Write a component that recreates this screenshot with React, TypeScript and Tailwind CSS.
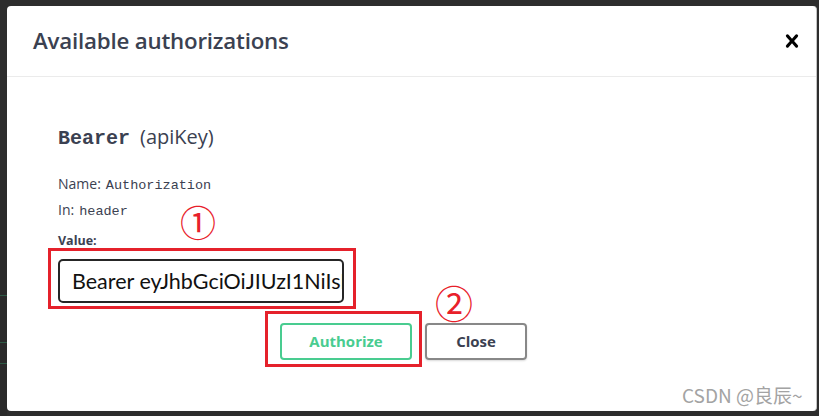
import React from 'react';

const sans = { fontFamily: '"Open Sans", "Noto Sans", sans-serif' };

function CloseIcon() {
  return (
    <svg width="26" height="26" viewBox="0 0 20 20" className="text-black">
      <path
        fill="currentColor"
        d="M14.348 14.849a1.2 1.2 0 0 1-1.697 0L10 11.819l-2.651 3.029a1.2 1.2 0 1 1-1.697-1.697l2.758-3.15-2.759-3.152a1.2 1.2 0 1 1 1.697-1.697L10 8.183l2.651-3.031a1.2 1.2 0 1 1 1.697 1.697l-2.758 3.152 2.758 3.15a1.2 1.2 0 0 1 0 1.698z"
      />
    </svg>
  );
}

export default function App() {
  return (
    <div className="relative w-[819px] h-[416px] overflow-hidden bg-[#2d2d2d] pt-[6px] pl-[7px] font-['Open_Sans','Noto_Sans',sans-serif]">
      {/* page behind the overlay */}
      <div className="absolute left-0 top-[180px] w-[7px] h-[236px] bg-[#2a2a2a]" />
      <div className="absolute left-0 top-[295px] w-[7px] h-px bg-[#2e5a45]" />
      <div className="absolute left-0 top-[342px] w-[7px] h-px bg-[#2e5a45]" />
      <div className="absolute left-0 top-[363px] w-[7px] h-px bg-[#2e5a45]" />

      {/* modal */}
      <div className="relative w-[810px] h-[405px] bg-white rounded-[4px] border-r border-[#c4c4c4] flex flex-col">
        <div className="h-[71px] shrink-0 flex items-center justify-between pl-[26px] pr-[11px] border-b border-[#ebebeb]">
          <h3 className="text-[22.3px] font-semibold text-[#3b4151] tracking-[-0.2px]">Available authorizations</h3>
          <CloseIcon />
        </div>

        <div className="flex flex-col pl-[51px] text-[#3b4151]">
          <h4 className="mt-[45px] h-[28px] flex items-baseline text-[20px]">
            <code className="font-['Liberation_Mono',monospace] font-bold">Bearer</code>
            <span className="ml-[10px] font-medium" style={sans}>(apiKey)</span>
          </h4>

          <div className="mt-[23px] h-[20px] flex items-baseline text-[14px]">
            <span>Name:</span>
            <code className="ml-[5px] text-[13.5px] font-['Liberation_Mono',monospace]">Authorization</code>
          </div>
          <div className="mt-[6px] h-[20px] flex items-baseline text-[14px]">
            <span>In:</span>
            <code className="ml-[5px] text-[13.5px] font-['Liberation_Mono',monospace]">header</code>
          </div>

          <label className="mt-[14px] h-[16px] flex items-center text-[12.5px] font-bold">Value:</label>

          <div className="mt-[10px] w-[286px] h-[44px] border-2 border-[#262626] rounded-[5px] overflow-hidden flex items-center pl-[12px]">
            <span className="whitespace-nowrap text-[21.5px] text-[#111] font-['Lato',sans-serif]">
              Bearer eyJhbGciOiJIUzI1NiIsInR5cCI6IkpXVCJ9
            </span>
          </div>

          <div className="mt-[20px] flex gap-[13px] ml-[222px]">
            <button className="w-[132px] h-[37px] rounded-[4px] border-2 border-[#49cc90] text-[#49cc90] text-[15px] font-bold">
              Authorize
            </button>
            <button className="w-[102px] h-[37px] rounded-[4px] border-2 border-[#888] text-[#3b4151] text-[15px] font-bold shadow-[0_1px_2px_rgba(0,0,0,0.15)]">
              Close
            </button>
          </div>
        </div>
      </div>

      {/* annotations */}
      <div className="absolute left-[48px] top-[248px] w-[308px] h-[61px] border-[3px] border-[#e5212b]" />
      <div className="absolute left-[265px] top-[311px] w-[157px] h-[56px] border-[3px] border-[#e5212b]" />
      <div className="absolute left-[180px] top-[203px] w-[36px] h-[36px] flex items-center justify-center text-[36px] leading-none text-[#e8202a] font-['Noto_Sans_CJK_SC',sans-serif]">
        ①
      </div>
      <div className="absolute left-[435px] top-[283px] w-[38px] h-[38px] flex items-center justify-center text-[38px] leading-none text-[#e8202a] font-['Noto_Sans_CJK_SC',sans-serif]">
        ②
      </div>
      <div className="absolute left-[682px] top-[385px] text-[19px] leading-none text-[#a3a3a3] font-['Noto_Sans_CJK_SC',sans-serif] [text-shadow:0_0_1px_rgba(255,255,255,0.8)]">
        CSDN @良辰~
      </div>
    </div>
  );
}
